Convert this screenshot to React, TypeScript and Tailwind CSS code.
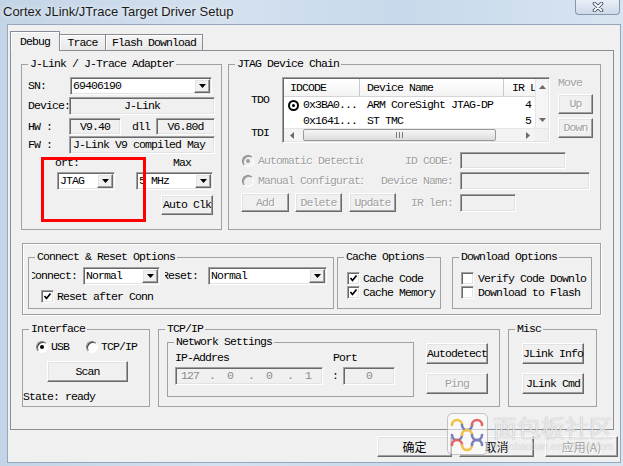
import React from "react";

const raised =
  "border border-t-white border-l-white border-r-[#696969] border-b-[#696969] shadow-[inset_-1px_-1px_0_#a0a0a0,inset_1px_1px_0_#e3e3e3]";
const sunken =
  "border border-t-[#a0a0a0] border-l-[#a0a0a0] border-r-white border-b-white shadow-[inset_1px_1px_0_#696969,inset_-1px_-1px_0_#e3e3e3]";
const gray = "text-[#a0a0a0] [text-shadow:1px_1px_0_#ffffff]";

function Btn({ className = "", off, children }: { className?: string; off?: boolean; children: React.ReactNode }) {
  return (
    <div className={`${raised} bg-[#f0f0f0] flex items-center justify-center leading-[12px] whitespace-nowrap ${off ? gray : ""} ${className}`}>
      {children}
    </div>
  );
}

function Field({ className = "", children }: { className?: string; children?: React.ReactNode }) {
  return <div className={`${sunken} flex items-center leading-[12px] whitespace-nowrap overflow-hidden ${className}`}>{children}</div>;
}

function Down({ color = "#000" }: { color?: string }) {
  return (
    <svg width="7" height="4" viewBox="0 0 7 4">
      <polygon points="0,0 7,0 3.5,4" fill={color} />
    </svg>
  );
}

function Combo({ className = "", value }: { className?: string; value: string }) {
  return (
    <div className={`${sunken} bg-white flex items-stretch p-[1px] ${className}`}>
      <div className="flex-1 flex items-center leading-[12px] pl-[1px] overflow-hidden whitespace-nowrap">{value}</div>
      <div className={`${raised} bg-[#f0f0f0] w-[16px] flex items-center justify-center`}>
        <Down />
      </div>
    </div>
  );
}

function Check({ on }: { on?: boolean }) {
  return (
    <div className={`w-[13px] h-[13px] shrink-0 bg-white ${sunken} flex items-center justify-center`}>
      {on && (
        <svg width="9" height="9" viewBox="0 0 9 9">
          <path d="M1.5 4 L3.5 6.5 L7.5 1.5" stroke="#000" strokeWidth="1.7" fill="none" />
        </svg>
      )}
    </div>
  );
}

function Radio({ on, off }: { on?: boolean; off?: boolean }) {
  return (
    <div
      className={`w-[12px] h-[12px] shrink-0 rounded-full border border-t-[#808080] border-l-[#808080] border-r-white border-b-white ${
        off ? "bg-[#f0f0f0] shadow-[inset_1px_1px_0_#a0a0a0]" : "bg-white shadow-[inset_1px_1px_0_#404040]"
      } flex items-center justify-center`}
    >
      {on && <div className={`w-[4px] h-[4px] rounded-full ${off ? "bg-[#a0a0a0]" : "bg-black"}`} />}
    </div>
  );
}

function Group({ title, className = "", children }: { title: string; className?: string; children?: React.ReactNode }) {
  return (
    <fieldset className={`border border-[#a0a0a0] min-w-0 shrink-0 ${className}`}>
      <legend className="ml-[6px] px-[2px] leading-[12px] whitespace-nowrap">{title}</legend>
      {children}
    </fieldset>
  );
}

function JtagList() {
  return (
    <div className={`w-[268px] h-[66px] ${sunken} bg-white flex flex-col p-[1px]`}>
      <div className="h-[49px] flex">
        <div className="flex-1 flex flex-col overflow-hidden">
          <div className="h-[18px] flex shrink-0 border-b border-[#d5d5d5] bg-[linear-gradient(#ffffff,#f3f3f3)]">
            <div className="w-[76px] pl-[6px] flex items-center border-r border-[#c8c8c8]">IDCODE</div>
            <div className="w-[144px] pl-[7px] flex items-center border-r border-[#c8c8c8]">Device Name</div>
            <div className="flex-1 pl-[8px] flex items-center overflow-hidden whitespace-nowrap">IR Len</div>
          </div>
          <div className="h-[16px] flex shrink-0 items-center">
            <div className="w-[76px] flex items-center pl-[4px]">
              <div className="w-[11px] h-[11px] rounded-full border-2 border-black flex items-center justify-center">
                <div className="w-[3px] h-[3px] rounded-full bg-black" />
              </div>
              <span className="ml-[4px]">0x3BA0...</span>
            </div>
            <div className="w-[144px] pl-[7px] whitespace-nowrap">ARM CoreSight JTAG-DP</div>
            <div className="flex-1 text-right pr-[4px]">4</div>
          </div>
          <div className="h-[16px] flex shrink-0 items-center">
            <div className="w-[76px] pl-[19px]">0x1641...</div>
            <div className="w-[144px] pl-[7px]">ST TMC</div>
            <div className="flex-1 text-right pr-[4px]">5</div>
          </div>
        </div>
        <div className="w-[13px] bg-[#f5f5f5] border-l border-[#e6e6e6] flex flex-col items-center justify-between py-[6px]">
          <svg width="7" height="4" viewBox="0 0 7 4">
            <polygon points="0,4 7,4 3.5,0" fill="#6a6a6a" />
          </svg>
          <Down color="#6a6a6a" />
        </div>
      </div>
      <div className="h-[15px] flex bg-[#f3f3f3] border-t border-[#e6e6e6]">
        <div className="w-[15px] flex items-center justify-center">
          <svg width="4" height="7" viewBox="0 0 4 7">
            <polygon points="4,0 4,7 0,3.5" fill="#6a6a6a" />
          </svg>
        </div>
        <div className="flex-1 flex items-center">
          <div className="ml-[4px] w-[193px] h-[12px] rounded-[2px] border border-[#9a9a9a] bg-[linear-gradient(#f6f6f6,#dcdcdc)] flex items-center justify-center gap-[2px]">
            <div className="w-px h-[6px] bg-[#7a7a7a]" />
            <div className="w-px h-[6px] bg-[#7a7a7a]" />
            <div className="w-px h-[6px] bg-[#7a7a7a]" />
          </div>
        </div>
        <div className="w-[15px] flex items-center justify-center">
          <svg width="4" height="7" viewBox="0 0 4 7">
            <polygon points="0,0 0,7 4,3.5" fill="#6a6a6a" />
          </svg>
        </div>
        <div className="w-[13px] bg-[#f0f0f0]" />
      </div>
    </div>
  );
}

function Logo() {
  return (
    <svg width="41" height="42" viewBox="0 0 41 42">
      <rect x="0.5" y="0.5" width="40" height="41" rx="5" fill="rgba(255,255,255,0.55)" stroke="rgba(160,160,160,0.6)" />
      <g fill="none" strokeWidth="2.6" strokeLinecap="round">
        <path d="M5 12 A5 5 0 0 1 15 12" stroke="#f2c14a" />
        <path d="M15 12 A5 5 0 0 0 25 12" stroke="#7a80b8" />
        <path d="M25 12 A5 5 0 0 1 35 12" stroke="#e36666" />
        <path d="M5 22 A5 5 0 0 0 15 22" stroke="#7a80b8" />
        <path d="M15 22 A5 5 0 0 1 25 22" stroke="#f2c14a" />
        <path d="M25 22 A5 5 0 0 0 35 22" stroke="#7a80b8" />
        <path d="M5 32 A5 5 0 0 1 15 32" stroke="#e36666" />
        <path d="M15 32 A5 5 0 0 0 25 32" stroke="#f2c14a" />
        <path d="M25 32 A5 5 0 0 1 35 32" stroke="#7a80b8" />
      </g>
    </svg>
  );
}

export default function App() {
  return (
    <div className="relative w-[623px] h-[466px] overflow-hidden bg-[linear-gradient(90deg,#c3d4e7,#d4e1ef_35%,#c8d9eb_65%,#d8e5f1)] font-['Liberation_Mono',monospace] text-[11.5px] tracking-[-0.9px] text-black">
      {/* title bar */}
      <div className="h-[24px] flex items-start">
        <div className="mt-[2px] ml-[3px] font-['Liberation_Sans',sans-serif] text-[13px] tracking-normal text-[#1b1b1b] [text-shadow:0_0_5px_#ffffff]">
          Cortex JLink/JTrace Target Driver Setup
        </div>
        <div className="ml-auto mr-[3px] w-[45px] h-[15px] rounded-b-[4px] border border-t-0 border-[#8797ad] bg-[linear-gradient(#e8eef6,#cdd9e8)] flex items-center justify-center">
          <svg width="14" height="10" viewBox="0 0 14 10">
            <path d="M3.5 1.5 L10.5 8.5 M10.5 1.5 L3.5 8.5" stroke="#3d4b60" strokeWidth="3.6" strokeLinecap="round" />
            <path d="M3.5 1.5 L10.5 8.5 M10.5 1.5 L3.5 8.5" stroke="#ffffff" strokeWidth="1.8" strokeLinecap="round" />
          </svg>
        </div>
      </div>

      {/* client area */}
      <div className="ml-[7px] w-[614px] h-[439px] border border-[#95a7bd] bg-[#f0f0f0] flex flex-col">
        {/* tabs */}
        <div className="mt-[6px] ml-[2px] h-[19px] flex items-end">
          <div className="relative z-10 -mb-px w-[50px] h-[20px] border border-b-0 border-[#898c95] bg-[#f0f0f0] shadow-[inset_1px_1px_0_#ffffff] flex items-center justify-center">
            Debug
          </div>
          <div className="-ml-px w-[47px] h-[16px] border border-b-0 border-[#898c95] bg-[linear-gradient(#f6f6f6,#e8e8e8)] shadow-[inset_1px_1px_0_#ffffff] flex items-center justify-center">
            Trace
          </div>
          <div className="-ml-px w-[98px] h-[16px] border border-b-0 border-[#898c95] bg-[linear-gradient(#f6f6f6,#e8e8e8)] shadow-[inset_1px_1px_0_#ffffff] flex items-center justify-center">
            Flash Download
          </div>
        </div>

        {/* tab panel */}
        <div className="relative ml-[2px] w-[604px] h-[380px] border border-[#898c95] bg-[#f0f0f0] flex flex-col">
          {/* row 1 */}
          <div className="mt-[7px] ml-[10px] flex items-start">
            <Group title="J-Link / J-Trace Adapter" className="w-[201px] h-[172px]">
              <div className="pl-[6px] flex flex-col">
                <div className="mt-[7px] h-[18px] flex items-center">
                  <span className="w-[42px]">SN:</span>
                  <Combo className="w-[142px] h-[18px]" value="69406190" />
                </div>
                <div className="mt-[2px] h-[18px] flex items-center">
                  <span className="w-[41px]">Device:</span>
                  <Field className="w-[146px] h-[18px] justify-center">J-Link</Field>
                </div>
                <div className="mt-[3px] h-[17px] flex items-center">
                  <span className="w-[41px]">HW :</span>
                  <Field className="w-[52px] h-[17px] justify-center">V9.40</Field>
                  <span className="ml-[11px] w-[18px]">dll</span>
                  <Field className="ml-[6px] w-[59px] h-[17px] justify-center">V6.80d</Field>
                </div>
                <div className="mt-[1px] h-[18px] flex items-center">
                  <span className="w-[41px]">FW :</span>
                  <Field className="w-[146px] h-[18px] pl-[3px]">J-Link V9 compiled May</Field>
                </div>
                <div className="mt-[3px] h-[12px] flex items-center leading-[12px]">
                  <span className="ml-[27px]">ort:</span>
                  <span className="ml-[94px]">Max</span>
                </div>
                <div className="mt-[3px] h-[18px] flex items-center">
                  <Combo className="ml-[29px] w-[58px] h-[18px]" value="JTAG" />
                  <Combo className="ml-[21px] w-[77px] h-[18px]" value="5 MHz" />
                </div>
                <div className="mt-[5px] h-[20px] flex items-center">
                  <Btn className="ml-[133px] w-[52px] h-[20px]">Auto Clk</Btn>
                </div>
              </div>
            </Group>

            <Group title="JTAG Device Chain" className="ml-[6px] w-[373px] h-[172px]">
              <div className="flex flex-col">
                <div className="mt-[7px] flex items-start">
                  <div className="w-[53px] pl-[22px] flex flex-col leading-[12px]">
                    <span className="mt-[17px]">TDO</span>
                    <span className="mt-[21px]">TDI</span>
                  </div>
                  <JtagList />
                  <div className="ml-[8px] w-[35px] flex flex-col">
                    <span className={`h-[12px] leading-[12px] ${gray}`}>Move</span>
                    <Btn off className="mt-[5px] h-[20px]">Up</Btn>
                    <Btn off className="mt-[4px] h-[20px]">Down</Btn>
                  </div>
                </div>
                <div className="mt-[9px] h-[17px] flex items-center">
                  <div className="w-[146px] pl-[13px] flex items-center">
                    <Radio on off />
                    <span className={`ml-[4px] w-[105px] overflow-hidden whitespace-nowrap leading-[12px] ${gray}`}>Automatic Detection</span>
                  </div>
                  <span className={`w-[78px] text-right ${gray}`}>ID CODE:</span>
                  <Field className="ml-[7px] w-[106px] h-[17px]" />
                </div>
                <div className="mt-[3px] h-[18px] flex items-center">
                  <div className="w-[146px] pl-[13px] flex items-center">
                    <Radio off />
                    <span className={`ml-[4px] w-[105px] overflow-hidden whitespace-nowrap leading-[12px] ${gray}`}>Manual Configuration</span>
                  </div>
                  <span className={`w-[78px] text-right ${gray}`}>Device Name:</span>
                  <Field className="ml-[7px] w-[130px] h-[18px]" />
                </div>
                <div className="mt-[3px] h-[19px] flex items-center">
                  <Btn off className="ml-[12px] w-[48px] h-[19px]">Add</Btn>
                  <Btn off className="ml-[6px] w-[47px] h-[19px]">Delete</Btn>
                  <Btn off className="ml-[7px] w-[47px] h-[19px]">Update</Btn>
                  <span className={`w-[57px] text-right ${gray}`}>IR len:</span>
                  <Field className="ml-[7px] w-[56px] h-[18px]" />
                </div>
              </div>
            </Group>
          </div>

          {/* row 2 */}
          <div className="mt-[13px] ml-[11px] w-[579px] h-[72px] border border-[#a0a0a0] shadow-[1px_1px_0_#ffffff,inset_1px_1px_0_#ffffff] flex items-start">
            <Group title="Connect & Reset Options" className="mt-[7px] ml-[5px] w-[306px] h-[58px]">
              <div className="flex flex-col">
                <div className="mt-[4px] h-[18px] flex items-center">
                  <div className="ml-[3px] w-[45px] flex justify-end overflow-hidden whitespace-nowrap">Connect:</div>
                  <Combo className="ml-[6px] w-[77px] h-[18px]" value="Normal" />
                  <div className="ml-[5px] w-[33px] flex justify-end overflow-hidden whitespace-nowrap">Reset:</div>
                  <Combo className="ml-[10px] w-[119px] h-[18px]" value="Normal" />
                </div>
                <div className="mt-[5px] h-[13px] flex items-center">
                  <div className="ml-[12px]">
                    <Check on />
                  </div>
                  <span className="ml-[3px]">Reset after Conn</span>
                </div>
              </div>
            </Group>
            <Group title="Cache Options" className="mt-[7px] ml-[3px] w-[104px] h-[58px]">
              <div className="flex flex-col pl-[9px]">
                <div className="mt-[9px] h-[13px] flex items-center">
                  <Check on />
                  <span className="ml-[3px]">Cache Code</span>
                </div>
                <div className="mt-[1px] h-[13px] flex items-center">
                  <Check on />
                  <span className="ml-[3px]">Cache Memory</span>
                </div>
              </div>
            </Group>
            <Group title="Download Options" className="mt-[7px] ml-[11px] w-[140px] h-[58px]">
              <div className="flex flex-col pl-[8px]">
                <div className="mt-[9px] h-[13px] flex items-center whitespace-nowrap overflow-hidden">
                  <Check />
                  <span className="ml-[4px]">Verify Code Downlo</span>
                </div>
                <div className="mt-[1px] h-[13px] flex items-center whitespace-nowrap">
                  <Check />
                  <span className="ml-[4px]">Download to Flash</span>
                </div>
              </div>
            </Group>
          </div>

          {/* row 3 */}
          <div className="mt-[8px] ml-[11px] flex items-start">
            <Group title="Interface" className="w-[128px] h-[84px]">
              <div className="flex flex-col">
                <div className="mt-[6px] h-[12px] flex items-center">
                  <div className="ml-[13px]">
                    <Radio on />
                  </div>
                  <span className="ml-[3px]">USB</span>
                  <div className="ml-[17px]">
                    <Radio />
                  </div>
                  <span className="ml-[3px]">TCP/IP</span>
                </div>
                <Btn className="mt-[8px] ml-[24px] w-[81px] h-[21px]">Scan</Btn>
                <span className="mt-[9px] h-[12px] leading-[12px]">State: ready</span>
              </div>
            </Group>
            <Group title="TCP/IP" className="ml-[8px] w-[342px] h-[84px]">
              <div className="flex items-start">
                <Group title="Network Settings" className="mt-[1px] ml-[8px] w-[247px] h-[61px]">
                  <div className="flex flex-col">
                    <div className="mt-[4px] h-[12px] flex items-center leading-[12px]">
                      <span className="ml-[7px] w-[54px]">IP-Addres</span>
                      <span className="ml-[104px]">Port</span>
                    </div>
                    <div className="mt-[3px] h-[18px] flex items-center">
                      <Field className="ml-[7px] w-[148px] h-[18px] text-[#8a8a8a]">
                        <span className="ml-[5px]">127</span>
                        <span className="ml-[10px]">.</span>
                        <span className="ml-[12px]">0</span>
                        <span className="ml-[15px]">.</span>
                        <span className="ml-[12px]">0</span>
                        <span className="ml-[15px]">.</span>
                        <span className="ml-[12px]">1</span>
                      </Field>
                      <span className="ml-[9px] w-[6px]">:</span>
                      <Field className="ml-[5px] w-[52px] h-[18px] justify-center text-[#8a8a8a]">0</Field>
                    </div>
                  </div>
                </Group>
                <div className="ml-[12px] w-[62px] flex flex-col">
                  <Btn className="mt-[8px] h-[21px]">Autodetect</Btn>
                  <Btn off className="mt-[9px] h-[21px]">Ping</Btn>
                </div>
              </div>
            </Group>
            <Group title="Misc" className="ml-[8px] w-[89px] h-[84px]">
              <div className="flex flex-col pl-[13px]">
                <Btn className="mt-[8px] w-[62px] h-[21px]">JLink Info</Btn>
                <Btn className="mt-[9px] w-[62px] h-[21px]">JLink Cmd</Btn>
              </div>
            </Group>
          </div>

          {/* red annotation box */}
          <div className="absolute left-[30px] top-[106px] w-[105px] h-[65px] border-[3px] border-[#ff0000]" />
        </div>

        {/* dialog buttons */}
        <div className="mt-[6px] h-[21px] flex items-center font-['Noto_Sans_CJK_SC',sans-serif] text-[12px] tracking-normal">
          <Btn className="ml-[369px] w-[75px] h-[21px]">确定</Btn>
          <Btn className="ml-[7px] w-[75px] h-[21px]">取消</Btn>
          <Btn off className="ml-[11px] w-[73px] h-[21px]">应用(A)</Btn>
        </div>
      </div>

      {/* watermark overlay */}
      <div className="absolute left-[447px] top-[413px] flex items-start">
        <Logo />
        <div className="ml-[5px] flex flex-col">
          <span className="font-['Noto_Sans_CJK_SC',sans-serif] text-[24px] leading-[28px] tracking-[0px] text-white/75 [text-shadow:0_0_1px_rgba(0,0,0,0.35)]">
            面包板社区
          </span>
          <span className="font-['Liberation_Sans',sans-serif] text-[10px] leading-[12px] tracking-normal text-white/50 [text-shadow:0_0_1px_rgba(0,0,0,0.2)]">
            mianbaoban.eet-china.com
          </span>
        </div>
      </div>
    </div>
  );
}
